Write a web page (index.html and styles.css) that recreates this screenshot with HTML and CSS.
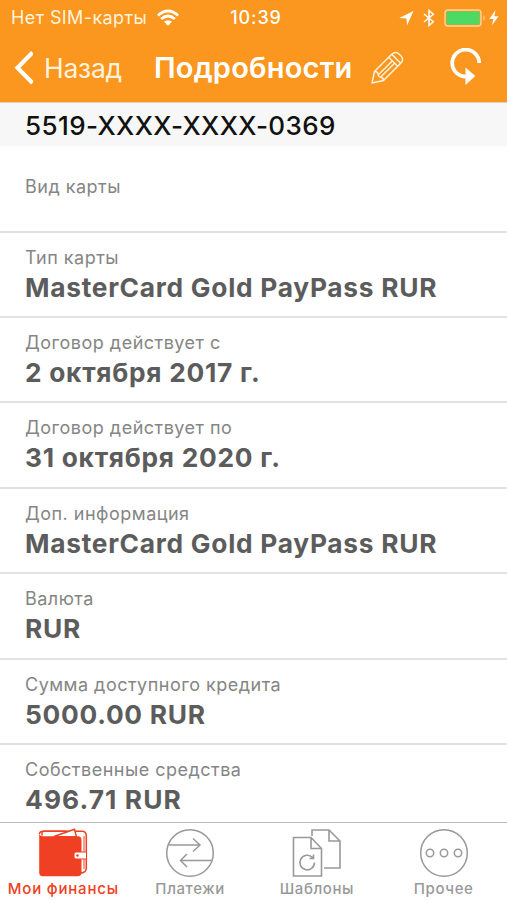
FILE: index.html
```html
<!DOCTYPE html>
<html lang="ru">
<head>
<meta charset="utf-8">
<meta name="viewport" content="width=device-width, initial-scale=1">
<title>Подробности</title>
<link rel="stylesheet" href="styles.css">
</head>
<body>
<div class="screen">
  <header class="header">
    <div class="status">
      <div class="status-left">
        <span class="carrier">Нет SIM-карты</span>
        <svg class="wifi" width="24" height="18" viewBox="0 0 24 18"><g fill="none" stroke="#fff" stroke-width="2.8"><path d="M1.9 6.5Q12 -2.6 22.1 6.5"/><path d="M5.2 10Q12 4 18.8 10"/></g><path d="M8 12.8Q12 9.6 16 12.8L12 16.8Z" fill="#fff"/></svg>
      </div>
      <time class="clock">10:39</time>
      <div class="status-right">
        <svg width="15" height="16" viewBox="0 0 15 16"><path d="M14.5 1 8 15.5 7.5 8.5 .2 8Z" fill="#fff"/></svg>
        <svg width="12" height="18" viewBox="0 0 12 18"><path d="M1 5 10.3 12.7 6 16.5V1.5L10.3 5.3 1 13" fill="none" stroke="#fff" stroke-width="1.5"/></svg>
        <svg width="43" height="18" viewBox="0 0 43 18"><rect x="1" y="1" width="36" height="16" rx="3" fill="none" stroke="#ffd59c" stroke-width="1.4"/><rect x="2.5" y="2.5" width="33" height="13" rx="1.5" fill="#4cd964"/><path d="M39.5 6Q42 9 39.5 12Z" fill="#ffd59c"/></svg>
        <svg width="10" height="16" viewBox="0 0 10 16"><path d="M6.5 0 .3 9H4.4L2.8 15.5 9.6 6.3H5.4Z" fill="#fff"/></svg>
      </div>
    </div>
    <nav class="navbar">
      <a class="back"><svg width="20" height="34" viewBox="0 0 20 34"><path d="M19.5 1.5 4.5 16.8 19.5 32" fill="none" stroke="#fff" stroke-width="4.2"/></svg><span class="back-text">Назад</span></a>
      <h1 class="title">Подробности</h1>
      <svg class="pencil" width="34" height="34" viewBox="0 0 34 34"><g fill="none" stroke="#fff4df" stroke-width="1.4" stroke-linejoin="round"><path d="M1 32 3.5 20.5 20.7 3.3Q24 0 27.5 2.5L30.5 5.5Q33 9 29.7 12.3L12.5 29.5Z"/><path d="M3.5 20.5Q6.8 20.3 7.2 24 7.5 26 9.5 26.2 12.8 26.7 12.5 29.5M7.2 24 21.5 9.7M9.5 26.2 23.8 11.9M17.7 6.3 27 15.6M20.7 3.3 29.7 12.3"/></g></svg>
      <svg class="refresh" width="34" height="40" viewBox="0 0 34 40"><path d="M30.2 15A13.5 13.5 0 1 0 18 28.5" fill="none" stroke="#fff" stroke-width="3.8"/><path d="M16.5 19.5 26.3 28 16.5 37Z" fill="#fff"/></svg>
    </nav>
  </header>
  <h2 class="card-number">5519-XXXX-XXXX-0369</h2>
  <main class="details">
    <section class="row row-empty"><span class="label">Вид карты</span></section>
    <section class="row"><span class="label">Тип карты</span><strong class="value">MasterCard Gold PayPass RUR</strong></section>
    <section class="row"><span class="label">Договор действует с</span><strong class="value">2 октября 2017 г.</strong></section>
    <section class="row"><span class="label">Договор действует по</span><strong class="value">31 октября 2020 г.</strong></section>
    <section class="row"><span class="label">Доп. информация</span><strong class="value">MasterCard Gold PayPass RUR</strong></section>
    <section class="row"><span class="label">Валюта</span><strong class="value">RUR</strong></section>
    <section class="row"><span class="label">Сумма доступного кредита</span><strong class="value">5000.00 RUR</strong></section>
    <section class="row"><span class="label">Собственные средства</span><strong class="value value-wide">496.71 RUR</strong></section>
  </main>
  <footer class="tabs">
    <a class="tab active"><svg width="50" height="50" viewBox="0 0 50 50"><path d="M4 7.5V4.5Q4 3.2 6 3.2H44Q48.3 3.2 48.3 8V40Q48.3 44.5 43 45" fill="#fff" stroke="#ef4023" stroke-width="1.5"/><path d="M16 8.5 36.5 1.2 38.5 9Z" fill="#fff" stroke="#ef4023" stroke-width="1.5"/><path d="M1.2 5Q1.5 8.3 5 8.3H40Q43.5 8.3 43.5 12V44.5Q43.5 48.3 39.5 48.3H5Q1.2 48.3 1.2 44.5Z" fill="#ef4023"/><path d="M1.5 6Q1.5 3.2 5 3.2H29" fill="none" stroke="#ef4023" stroke-width="1.5"/><path d="M46 8V41" stroke="#ef4023" stroke-width="1"/><path d="M48.5 24H38Q36 24 36 26V29Q36 31 38 31H48.5Z" fill="#fff" stroke="#ef4023"/><circle cx="39.5" cy="27.5" r="1.2" fill="#ef4023"/></svg><span class="tab-text">Мои финансы</span></a>
    <a class="tab"><svg width="50" height="50" viewBox="0 0 50 50"><g fill="none" stroke="#999" stroke-width="1.5"><circle cx="25" cy="25" r="23.3"/><path d="M4 17H35M28 10.5 35 17 28 23.5M46.5 32.5H15.5M22 26 15.5 32.5 22 39"/></g></svg><span class="tab-text">Платежи</span></a>
    <a class="tab"><svg width="50" height="50" viewBox="0 0 50 50"><g fill="none" stroke="#999" stroke-width="1.6"><path d="M20 8V2H37L48 13V40H32M37 2V13H48M1.5 9.5H19L29.5 20.5V48H1.5ZM19 9.5V20.5H29.5M20.5 29.5A7.3 7.3 0 1 0 22.5 34.5M21.5 26.5V30.5H17.5"/></g></svg><span class="tab-text">Шаблоны</span></a>
    <a class="tab"><svg width="50" height="50" viewBox="0 0 50 50"><g fill="none" stroke="#999" stroke-width="1.5"><circle cx="25" cy="25" r="23.3"/><circle cx="11" cy="25" r="3.7"/><circle cx="25" cy="25" r="3.7"/><circle cx="39" cy="25" r="3.7"/></g></svg><span class="tab-text">Прочее</span></a>
  </footer>
</div>
</body>
</html>
```
FILE: styles.css
```css
* { box-sizing: border-box; }
body { margin: 0; background: #fff; font-family: Inter, "Liberation Sans", sans-serif; }
svg { display: block; flex: none; }
.screen { display: flex; flex-direction: column; width: 507px; height: 900px; overflow: hidden; }
.header { flex: none; height: 102px; background: #fb961e; color: #fff; }
.status { display: grid; grid-template-columns: 205px 102px 200px; height: 34px; align-items: center; }
.status-left { display: flex; align-items: center; padding-left: 11px; }
.carrier { width: 145px; font-size: 18px; line-height: 34px; white-space: nowrap; color: #fff3df; letter-spacing: .4px; }
.clock { text-align: center; font-size: 18px; font-weight: 500; line-height: 36px; letter-spacing: .9px; }
.status-right { display: flex; align-items: center; justify-content: flex-end; gap: 9px; padding-right: 8px; }
.status-right svg:last-child { margin-left: -7px; }
.navbar { display: flex; align-items: center; height: 68px; }
.back { display: flex; align-items: center; width: 154px; padding-left: 13px; gap: 11px; }
.back-text { font-size: 26.5px; line-height: 68px; color: #fff3df; letter-spacing: -.25px; }
.title { width: 217px; margin: 0; font-size: 29px; font-weight: 600; line-height: 70px; white-space: nowrap; letter-spacing: .2px; }
.refresh { margin-left: 44px; }
.card-number { flex: none; height: 44px; margin: 0; padding-left: 25px; background: #f7f7f7; color: #111; font-size: 26px; font-weight: 500; line-height: 45px; border-top: 1px solid #ddd0bf; letter-spacing: .4px; }
.details { flex: 1; min-height: 0; padding-top: 1.1px; overflow: hidden; }
.row { display: flex; flex-direction: column; align-items: flex-start; height: 85.45px; padding: 12px 25px 0; border-bottom: 2px solid #e2e2e2; }
.row-empty { padding-top: 27px; }
.label { font-size: 18px; line-height: 26px; color: #858585; white-space: nowrap; letter-spacing: .49px; }
.value { margin-top: 1px; font-size: 26.3px; line-height: 32px; font-weight: 700; color: #5c5c5c; white-space: nowrap; letter-spacing: .73px; }
.value-wide { letter-spacing: 1.1px; }
.tabs { flex: none; display: grid; grid-template-columns: repeat(4, 1fr); height: 78px; border-top: 1px solid #bcbcbc; }
.tab { display: flex; flex-direction: column; align-items: center; padding-top: 5px; color: #999; }
.tab-text { font-size: 15px; line-height: 22px; font-weight: 500; white-space: nowrap; letter-spacing: .6px; }
.active { color: #ef4023; }
.active .tab-text { letter-spacing: .8px; }
```
